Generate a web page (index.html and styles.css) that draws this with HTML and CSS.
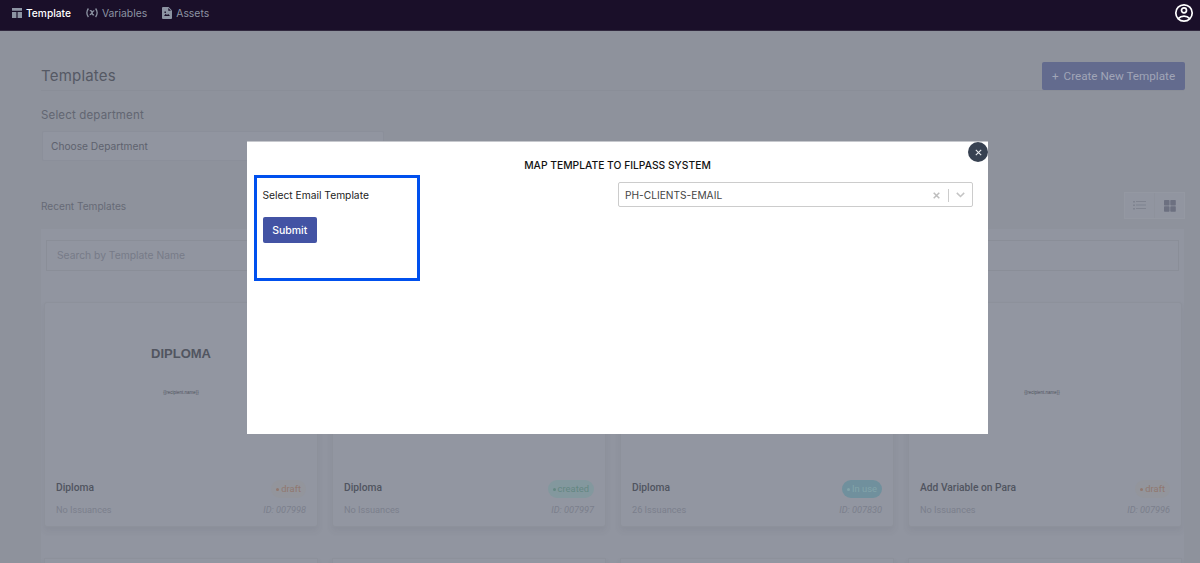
FILE: index.html
```html
<!DOCTYPE html>
<html lang="en">

<head>
  <meta charset="UTF-8" />
  <title>Templates</title>
  <link rel="stylesheet" href="styles.css">
</head>

<body>

  <!-- Top navigation -->
  <nav class="navbar">
    <a class="nav-item active">
      <svg width="10" height="10" viewBox="0 0 10 10" fill="#8d94a3"><path d="M0 0h10v2.8H0zM0 4h4.4v6H0zM5.6 4H10v6H5.6z" /></svg>
      <span>Template</span>
    </a>
    <a class="nav-item">
      <svg width="12" height="10" viewBox="0 0 12 10" fill="none" stroke="#8d94a3" stroke-width="1.3"><path d="M2.4.5C.4 3.2.4 6.2 2.4 9M9.6.5c2 2.7 2 5.7 0 8.5M3.8 2.8c1.6-.6 2 .5 2.3 2 .3 1.6.8 2.3 2 1.900M8.300 2.700C6.300 2.900 5.500 6.800 3.700 6.700" /></svg>
      <span>Variables</span>
    </a>
    <a class="nav-item">
      <svg width="10" height="12" viewBox="0 0 10 12"><path fill="#8d94a3" d="M1 0h5.600L10 3.400V11a1 1 0 0 1-1 1H1a1 1 0 0 1-1-1V1a1 1 0 0 1 1-1z" /><path fill="#1a0f29" d="M6.300 1v2.700H9zM2 9l1.700-2.300L5 8l1.200-1L8 9zM2.500 4.500h1.400v1.400H2.500z" /></svg>
      <span>Assets</span>
    </a>
    <svg class="user-icon" width="20" height="20" viewBox="0 0 20 20" fill="none" stroke="#fff" stroke-width="1.700"><circle cx="10" cy="10" r="8.200" /><circle cx="10" cy="7.300" r="2.500" /><path d="M4.200 15.600c3.200-3.400 8.400-3.400 11.600 0" /></svg>
  </nav>

  <!-- Page behind the modal -->
  <main class="page">
    <header class="page-header">
      <h1>Templates</h1>
      <button class="create-btn"><span class="plus">+</span>Create New Template</button>
    </header>

    <label class="dept-label">Select department</label>
    <div class="dept-select">Choose Department</div>

    <div class="recent-row">
      <h2>Recent Templates</h2>
      <div class="view-toggle">
        <span class="view-list"><svg width="13" height="9" viewBox="0 0 13 9" fill="#7f838f"><path d="M0 0h2v1.500H0zM3 0h10v1.100H3zM0 3.500h2V5H0zM3 3.500h10v1.100H3zM0 7h2v1.500H0zM3 7h10v1.100H3z" /></svg></span>
        <span class="view-grid"><svg width="12" height="12" viewBox="0 0 12 12" fill="#6c7080"><rect width="5.500" height="5.500" rx=".7" /><rect x="6.300" width="5.500" height="5.500" rx=".7" /><rect y="6.300" width="5.500" height="5.500" rx=".7" /><rect x="6.300" y="6.300" width="5.500" height="5.500" rx=".7" /></svg></span>
      </div>
    </div>

    <section class="panel">
      <div class="search">Search by Template Name</div>

      <div class="cards">
        <article class="card">
          <div class="preview">
            <strong>DIPLOMA</strong>
            <small>{{recipient.name}}</small>
          </div>
          <div class="card-row">
            <h3>Diploma</h3>
            <span class="badge draft">draft</span>
          </div>
          <div class="card-row meta"><span>No Issuances</span><em>ID: 007998</em></div>
        </article>

        <article class="card">
          <div class="preview"></div>
          <div class="card-row">
            <h3>Diploma</h3>
            <span class="badge created">created</span>
          </div>
          <div class="card-row meta"><span>No Issuances</span><em>ID: 007997</em></div>
        </article>

        <article class="card">
          <div class="preview"></div>
          <div class="card-row">
            <h3>Diploma</h3>
            <span class="badge in-use">In use</span>
          </div>
          <div class="card-row meta"><span>26 Issuances</span><em>ID: 007830</em></div>
        </article>

        <article class="card">
          <div class="preview para">
            <small>{{recipient.name}}</small>
          </div>
          <div class="card-row">
            <h3>Add Variable on Para</h3>
            <span class="badge draft">draft</span>
          </div>
          <div class="card-row meta"><span>No Issuances</span><em>ID: 007996</em></div>
        </article>

        <article class="card next"></article>
        <article class="card next"></article>
        <article class="card next"></article>
        <article class="card next"></article>
      </div>
    </section>
  </main>

  <!-- Mapping modal -->
  <div class="modal">
    <button class="modal-close"><svg width="7" height="7" viewBox="0 0 7 7" stroke="#e8eaee" stroke-width="1.100"><path d="M.8.8l5.400 5.400M6.200.8L.8 6.200" /></svg></button>
    <h2 class="modal-title">MAP TEMPLATE TO FILPASS SYSTEM</h2>
    <div class="modal-body">
      <div class="highlight">
        <label>Select Email Template</label>
        <button class="submit-btn">Submit</button>
      </div>
      <div class="email-select">
        <span class="email-value">PH-CLIENTS-EMAIL</span>
        <svg width="7" height="7" viewBox="0 0 7 7" stroke="#bdbdbd" stroke-width="1.500"><path d="M.7.7l5.600 5.600M6.300.7L.7 6.300" /></svg>
        <i class="divider"></i>
        <svg width="9" height="6" viewBox="0 0 9 6" fill="none" stroke="#c4c4c4" stroke-width="1.500"><path d="M.8.9l3.700 3.600L8.200.9" /></svg>
      </div>
    </div>
  </div>

</body>

</html>
```

FILE: styles.css
```css
* {
  box-sizing: border-box;
}

body {
  margin: 0;
  height: 563px;
  overflow: hidden;
  background: #8e929c;
  font-family: Inter, sans-serif;
}

h1,
h2,
h3 {
  margin: 0;
}

button {
  border: none;
  padding: 0;
  font-family: inherit;
}

/* Navigation */
.navbar {
  display: flex;
  align-items: center;
  height: 31px;
  padding: 0 6px 4px 12px;
  background: #1a0f29;
  border-bottom: 1px solid #30283e;
}

.nav-item {
  display: flex;
  align-items: center;
  gap: 4px;
  margin-right: 15px;
  font-size: 10.4px;
  line-height: 14px;
  color: #8d94a3;
}

.nav-item span {
  padding-top: 1px;
}

.nav-item.active {
  color: #fff;
  font-size: 10.2px;
  font-weight: 500;
}

.nav-item.active span {
  padding-top: 0;
}

.user-icon {
  margin-left: auto;
}

/* Page */
.page {
  padding: 31px 16px 0 41px;
}

.page-header {
  display: flex;
  align-items: center;
  justify-content: space-between;
  height: 29px;
  border-bottom: 1px solid #8a8e98;
}

.page-header h1 {
  font-size: 15px;
  font-weight: 400;
  letter-spacing: 0.2px;
  line-height: 18px;
  color: #555964;
}

.create-btn {
  width: 143px;
  height: 28px;
  margin-right: -1px;
  border-radius: 2px;
  background: #636b8e;
  color: #a0a5b7;
  font: 400 11.7px Roboto, sans-serif;
}

.plus {
  margin-right: 5px;
}

.dept-label {
  display: block;
  margin-top: 17px;
  font-size: 11.5px;
  letter-spacing: 0.16px;
  line-height: 15px;
  color: #626672;
}

.dept-select {
  width: 342px;
  height: 30px;
  margin: 8px 0 0 1px;
  padding-left: 8px;
  border: 1px solid #8b8f9a;
  border-radius: 2px;
  background: #9195a0;
  font-size: 10.2px;
  line-height: 28px;
  color: #5e626e;
}

.recent-row {
  display: flex;
  align-items: center;
  justify-content: space-between;
  height: 27px;
  margin-top: 31px;
}

.recent-row h2 {
  font-size: 10.1px;
  font-weight: 400;
  color: #666a76;
}

.view-toggle {
  display: flex;
  width: 61px;
  height: 27px;
  margin-right: -1px;
  border: 1px solid #9498a2;
  background: #9195a0;
}

.view-toggle span {
  display: flex;
  flex: 1;
  align-items: center;
  justify-content: center;
}

.view-grid {
  border-left: 1px solid #8e929c;
}

.panel {
  height: 334px;
  margin-top: 10px;
  padding: 11px 2px 0 3px;
  background: #9195a0;
  overflow: hidden;
}

.search {
  height: 31px;
  margin: 0 3px 0 2px;
  padding-left: 10px;
  border: 1px solid #8a8e98;
  font-size: 10.3px;
  line-height: 29px;
  color: #777b88;
}

/* Cards */
.cards {
  display: grid;
  grid-template-columns: repeat(4, 1fr);
  gap: 31px 14px;
  margin-top: 31px;
}

.card {
  height: 225px;
  padding: 0 11px;
  border: 1px solid #8d919b;
  border-radius: 3px;
  background: #9296a1;
  box-shadow: 0 4px 6px rgba(60, 65, 80, 0.08);
  font-family: Roboto, sans-serif;
}

.card.next {
  height: 5px;
  border-bottom: none;
  border-radius: 0;
}

.preview {
  display: flex;
  flex-direction: column;
  align-items: center;
  justify-content: flex-end;
  height: 176px;
  padding-bottom: 82px;
  font-family: "Liberation Sans", sans-serif;
}

.preview.para {
  padding-right: 6px;
}

.preview strong {
  margin-bottom: 27px;
  font-size: 13px;
  line-height: 16px;
  color: #515560;
}

.preview small {
  font-size: 4.5px;
  line-height: 8px;
  color: #50545f;
}

.card-row {
  display: flex;
  align-items: center;
  justify-content: space-between;
  height: 20px;
}

.card h3 {
  font-size: 10.25px;
  font-weight: 500;
  line-height: 16px;
  margin-bottom: 2px;
  color: #50545f;
}

.badge {
  height: 18px;
  padding: 0 5px;
  border-radius: 9px;
  font-size: 9.4px;
  line-height: 18px;
}

.badge::before {
  content: "";
  display: inline-block;
  width: 3px;
  height: 3px;
  margin: 0 2px 1px 0;
  border-radius: 50%;
  background: currentColor;
}

.draft {
  background: #93959c;
  color: #91786f;
}

.created {
  background: #83989e;
  color: #648782;
}

.in-use {
  background: #70909d;
  color: #83a4aa;
}

.meta {
  font-size: 9.2px;
  color: #7b7f8c;
}

/* Modal */
.modal {
  position: absolute;
  top: 141px;
  left: 247px;
  width: 741px;
  height: 293px;
  background: #fff;
  border-top: 1px solid #c6c8cd;
}

.modal-close {
  position: absolute;
  top: 0;
  right: 0;
  display: flex;
  align-items: center;
  justify-content: center;
  width: 20px;
  height: 20px;
  border-radius: 50%;
  background: #374151;
}

.modal-title {
  padding-top: 16px;
  font-size: 10.3px;
  font-weight: 500;
  line-height: 14px;
  text-align: center;
  color: #111;
}

.modal-body {
  display: flex;
  align-items: flex-start;
  justify-content: space-between;
  padding: 3px 15px 0 7px;
}

.highlight {
  display: flex;
  flex-direction: column;
  align-items: flex-start;
  width: 166px;
  height: 106px;
  padding: 10px 5.5px;
  border: 3px solid #0050ee;
  font-size: 10.25px;
  line-height: 14px;
  color: #222;
}

.submit-btn {
  width: 54.5px;
  height: 26px;
  margin-top: 15px;
  border-radius: 2px;
  background: #4353a4;
  color: #fff;
  font-size: 10.5px;
  font-weight: 500;
}

.email-select {
  display: flex;
  align-items: center;
  width: 355px;
  height: 25px;
  margin-top: 7px;
  padding: 1px 7px 0 6px;
  border: 1px solid #ccc;
  border-radius: 2px;
  font-size: 10.2px;
  color: #444;
}

.email-value {
  flex: 1;
}

.divider {
  width: 1px;
  height: 13px;
  margin: 0 7px 0 8px;
  background: #ccc;
}
```
